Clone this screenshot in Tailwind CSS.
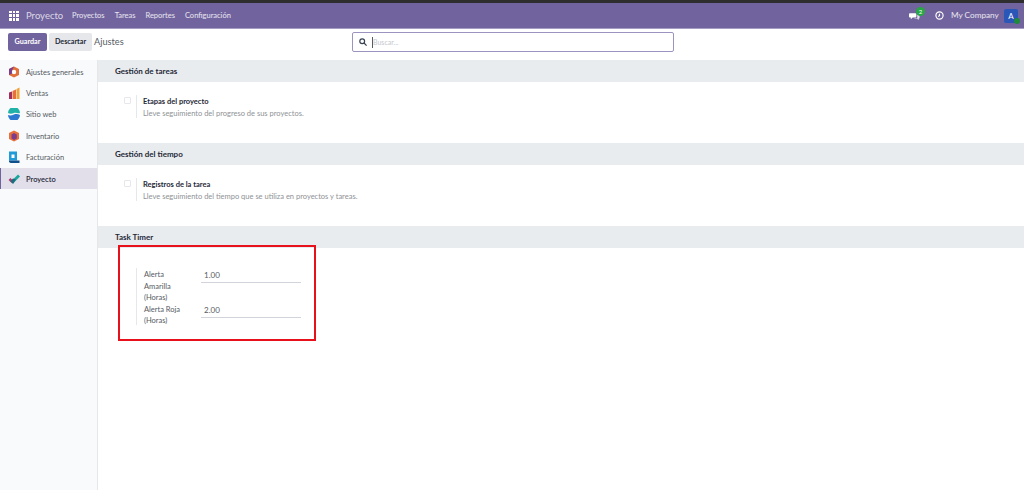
<!DOCTYPE html>
<html lang="es">
<head>
<meta charset="utf-8">
<script src="https://cdn.jsdelivr.net/npm/@tailwindcss/browser@4"></script>
</head>
<body class="bg-white">
<div class="relative w-[1024px] h-[490px] overflow-hidden flex flex-col font-['Lato',sans-serif] antialiased text-[7.500px] text-[#555b63]">
  <div class="h-[3px] shrink-0 bg-[#2e2e2e]"></div>
  <header class="h-[26px] shrink-0 bg-[#71639e] flex items-center text-white pl-[9px] pr-[6px] border-b border-[#a59cc4]">
    <div class="grid grid-cols-3 gap-px w-[10px] h-[10px] mr-[7px]">
      <i class="bg-white"></i><i class="bg-white"></i><i class="bg-white"></i><i class="bg-white"></i><i class="bg-white"></i><i class="bg-white"></i><i class="bg-white"></i><i class="bg-white"></i><i class="bg-white"></i>
    </div>
    <span class="text-[9.500px] w-[46px] text-white/75 pt-px">Proyecto</span>
    <nav class="flex gap-[10px] text-[7.500px] text-white/85 pt-px">
      <span>Proyectos</span><span>Tareas</span><span>Reportes</span><span>Configuración</span>
    </nav>
    <div class="ml-auto flex items-center">
      <div class="relative w-[12px] h-[10px] mr-[11px]">
        <svg viewBox="0 0 12 10" class="w-[11px] h-[10px]"><path fill="#fff" d="M1 2h6a1 1 0 0 1 1 1v2.500a1 1 0 0 1-1 1H4L2 8.500v-2H1a1 1 0 0 1-1-1V3a1 1 0 0 1 1-1z"/><path fill="#fff" opacity=".8" d="M9 3.500h1.500a1 1 0 0 1 1 1V7a1 1 0 0 1-1 1v1.500L9 8H6v-.5h3z"/></svg>
        <span class="absolute left-[7px] top-[-4px] w-[9px] h-[9px] rounded-full bg-[#28a745] text-[6px] leading-[9px] text-center text-white">2</span>
      </div>
      <svg viewBox="0 0 10 10" class="w-[9px] h-[9px] mr-[7px] ml-[3px]" fill="none" stroke="#fff" stroke-width="1.300"><circle cx="5" cy="5" r="4"/><path d="M5 3v2.200L3.500 6"/></svg>
      <span class="text-[8.200px] w-[51px] text-white/85">My Company</span>
      <div class="relative w-[14px] h-[14px] rounded-[2px] bg-[#2a56b8] text-[8px] leading-[14px] text-center ml-[2px]">A
        <span class="absolute right-[-2px] bottom-[-1px] w-[6px] h-[6px] rounded-full bg-[#1e8a3a]"></span>
      </div>
    </div>
  </header>
  <div class="h-[31px] shrink-0 flex items-start pt-[4px] pl-[8px] relative">
    <button class="w-[39px] h-[18px] pt-px rounded-[2px] bg-[#71639e] text-white font-bold text-[7.200px]">Guardar</button>
    <button class="w-[43px] h-[18px] pt-px rounded-[2px] bg-[#e5e7eb] text-[#1f2937] font-bold text-[7.200px] ml-[2px]">Descartar</button>
    <span class="text-[9.200px] leading-[18px] ml-[2px] text-[#555b63]">Ajustes</span>
    <div class="absolute left-[352px] top-[3px] w-[322px] h-[20px] rounded-[2px] border border-[#9d93c0] flex items-center pl-[6px]">
      <svg viewBox="0 0 10 10" class="w-[8px] h-[8px]" fill="none" stroke="#374151" stroke-width="1.500"><circle cx="4" cy="4" r="3"/><path d="M6.300 6.300 9.500 9.500"/></svg>
      <span class="w-px h-[11px] bg-[#555b63] ml-[5px]"></span>
      <span class="text-[7px] text-[#c4c7cd]">Buscar...</span>
    </div>
  </div>
  <main class="flex-1 flex min-h-0">
    <aside class="w-[98px] shrink-0 bg-[#f9fafb] border-r border-[#e5e7eb] pt-[1px]">
      <div class="h-[21.400px] flex items-center pl-[8px] gap-[6px]">
        <svg viewBox="0 0 12 12" class="w-[12px] h-[12px]"><path fill="#e2703a" d="M6 .5 11 3v6l-5 2.500L1 9V3z"/><path fill="#7d3c8c" d="M6 .5 1 3v6l3-1.500V4.500z"/><circle cx="6" cy="6" r="2.200" fill="#fff"/></svg>
        <span class="pt-px">Ajustes generales</span>
      </div>
      <div class="h-[21.400px] flex items-center pl-[8px] gap-[6px]">
        <svg viewBox="0 0 12 12" class="w-[12px] h-[12px]"><path fill="#a32e5e" d="M1 5.500 4 4.500V12H1z"/><path fill="#e8703a" d="M4.500 4 8 2.500V12H4.500z"/><path fill="#f0a33a" d="M8.500 2 11.500 .5V12h-3z"/></svg>
        <span class="pt-px">Ventas</span>
      </div>
      <div class="h-[21.400px] flex items-center pl-[8px] gap-[6px]">
        <svg viewBox="0 0 12 12" class="w-[12px] h-[12px]"><path fill="#20b2a8" d="M0 5a6 6 0 0 1 12 0c-2 1-4-.8-6 0s-4 1-6 0z"/><path fill="#2b78d0" d="M0 7c2 1 4 .2 6-.5s4-.6 6 .5a6 6 0 0 1-12 0z"/></svg>
        <span class="pt-px">Sitio web</span>
      </div>
      <div class="h-[21.400px] flex items-center pl-[8px] gap-[6px]">
        <svg viewBox="0 0 12 12" class="w-[12px] h-[12px]"><path fill="#e8703a" d="M6 .5 11 3v6l-5 2.500L1 9V3z"/><path fill="#7d3c8c" d="M6 3 8.800 4.500v4L6 10 3.500 8.500v-4z"/></svg>
        <span class="pt-px">Inventario</span>
      </div>
      <div class="h-[21.400px] flex items-center pl-[8px] gap-[6px]">
        <svg viewBox="0 0 12 12" class="w-[12px] h-[12px]"><path fill="#1f9bd8" d="M1 .5h8v9H1z"/><path fill="#0f4f8c" d="M1 9.500h10.500V12H3a2 2 0 0 1-2-2.500z"/><rect x="3.500" y="3.500" width="3" height="3.500" fill="#fff"/></svg>
        <span class="pt-px">Facturación</span>
      </div>
      <div class="h-[21.400px] flex items-center pl-[7px] gap-[6px] bg-[#e2dfeb] border-l border-[#71639e]">
        <svg viewBox="0 0 12 12" class="w-[12px] h-[12px]"><path fill="none" stroke="#b0386c" stroke-width="2.600" d="M1.500 6 4.500 9"/><path fill="none" stroke="#1aa69a" stroke-width="2.800" d="M4 9.500 11 2.500"/><path fill="#1d6d7c" d="M2.500 8 5 5.500l3 1-3 4.500z"/></svg>
        <span class="pt-px text-[#1f2937] font-semibold">Proyecto</span>
      </div>
    </aside>
    <section class="flex-1 min-w-0">
      <h2 class="h-[22px] bg-[#e9ecef] flex items-center pl-[17px] font-bold text-[8px] text-[#1f2937]">Gestión de tareas</h2>
      <div class="h-[61px] pt-[13px] pl-[26px]">
        <div class="flex">
          <span class="w-[7px] h-[7px] mt-[2px] rounded-[1px] border border-[#e5e7eb]"></span>
          <div class="ml-[5px] pl-[6px] pt-px border-l border-[#e5e7eb] h-[23px]">
            <p class="font-bold text-[7.500px] leading-[11.500px] text-[#1f2937]">Etapas del proyecto</p>
            <p class="text-[7.500px] leading-[11px] text-[#8f9296]">Lleve seguimiento del progreso de sus proyectos.</p>
          </div>
        </div>
      </div>
      <h2 class="h-[22px] bg-[#e9ecef] flex items-center pl-[17px] font-bold text-[8px] text-[#1f2937]">Gestión del tiempo</h2>
      <div class="h-[61px] pt-[13px] pl-[26px]">
        <div class="flex">
          <span class="w-[7px] h-[7px] mt-[2px] rounded-[1px] border border-[#e5e7eb]"></span>
          <div class="ml-[5px] pl-[6px] pt-px border-l border-[#e5e7eb] h-[23px]">
            <p class="font-bold text-[7.500px] leading-[11.500px] text-[#1f2937]">Registros de la tarea</p>
            <p class="text-[7.500px] leading-[11px] text-[#8f9296]">Lleve seguimiento del tiempo que se utiliza en proyectos y tareas.</p>
          </div>
        </div>
      </div>
      <h2 class="h-[22px] bg-[#e9ecef] flex items-center pl-[17px] font-bold text-[8px] text-[#1f2937]">Task Timer</h2>
      <div class="ml-[38px] mt-[20px] w-[165px] h-[57px] border-l border-[#e5e7eb] pl-[7px] pt-[1px] text-[7.500px] leading-[11.500px] text-[#555b63]">
        <div class="flex h-[34.500px]">
          <span class="w-[40px] mr-[17px] shrink-0">Alerta Amarilla (Horas)</span>
          <span class="w-[100px] h-[14px] pt-[1px] border-b border-[#d1d5db] pl-[3px] text-[8px]">1.00</span>
        </div>
        <div class="flex h-[23px]">
          <span class="w-[40px] mr-[17px] shrink-0">Alerta Roja (Horas)</span>
          <span class="w-[100px] h-[14px] pt-[1px] border-b border-[#d1d5db] pl-[3px] text-[8px]">2.00</span>
        </div>
      </div>
    </section>
  </main>
  <div class="absolute left-[118px] top-[245px] w-[198px] h-[96px] border-[2.500px] border-[#e8101a]"></div>
</div>
</body>
</html>
